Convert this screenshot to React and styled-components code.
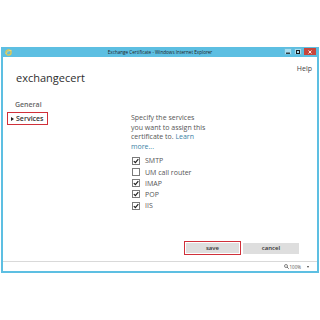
import React from 'react';
import styled, {createGlobalStyle} from 'styled-components';

const Global = createGlobalStyle`
	html, body {
		margin: 0;
		padding: 0;
		background: #fff;
		font-family: "Open Sans", "Liberation Sans", sans-serif;
	}
`;

const services = [
	{name: 'SMTP', checked: true},
	{name: 'UM call router', checked: false},
	{name: 'IMAP', checked: true},
	{name: 'POP', checked: true},
	{name: 'IIS', checked: true},
];

function Check({on}) {
	return (
		<Box>
			{on && (
				<svg width="6" height="6" viewBox="0 0 6 6">
					<path d="M0.8 3.1 L2.4 4.7 L5.3 1.1" fill="none" stroke="#222" strokeWidth="1.2" />
				</svg>
			)}
		</Box>
	);
}

export default function App() {
	return (
		<Page>
			<Global />
			<Window>
				<TitleBar>
					<IeIcon>
						<svg width="7" height="7" viewBox="0 0 7 7">
							<circle cx="3.5" cy="3.5" r="2.6" fill="none" stroke="#e6c84a" strokeWidth="1.3" />
							<path d="M0.6 5 Q3.5 0.5 6.6 1.4" fill="none" stroke="#f3dd7a" strokeWidth="0.8" />
						</svg>
					</IeIcon>
					<Caption>Exchange Certificate - Windows Internet Explorer</Caption>
					<Controls>
						<Ctl>
							<svg width="4" height="4" viewBox="0 0 4 4">
								<rect x="0" y="2.6" width="4" height="1.2" fill="#1b1b1b" />
							</svg>
						</Ctl>
						<Ctl>
							<svg width="4" height="4" viewBox="0 0 4 4">
								<rect x="0.5" y="0.5" width="3" height="3" fill="none" stroke="#1b1b1b" strokeWidth="1" />
							</svg>
						</Ctl>
						<Ctl close>
							<svg width="4" height="4" viewBox="0 0 4 4">
								<path d="M0.5 0.5 L3.5 3.5 M3.5 0.5 L0.5 3.5" stroke="#fff" strokeWidth="0.9" />
							</svg>
						</Ctl>
					</Controls>
				</TitleBar>
				<Client>
					<Main>
						<Header>
							<Title>exchangecert</Title>
							<Help>Help</Help>
						</Header>
						<Body>
							<Nav>
								<NavItem>General</NavItem>
								<NavItem active>
									<Arrow />
									Services
								</NavItem>
							</Nav>
							<Panel>
								<Intro>
									Specify the services
									<br />
									you want to assign this
									<br />
									certificate to. <Link>Learn</Link>
									<br />
									<Link>more...</Link>
								</Intro>
								<List>
									{services.map((s) => (
										<Row key={s.name}>
											<Check on={s.checked} />
											<span>{s.name}</span>
										</Row>
									))}
								</List>
							</Panel>
						</Body>
						<Footer>
							<Button primary>save</Button>
							<Button>cancel</Button>
						</Footer>
					</Main>
					<StatusBar>
						<Zoom>
							<svg width="5" height="5" viewBox="0 0 5 5">
								<circle cx="2" cy="2" r="1.5" fill="none" stroke="#555" strokeWidth="0.7" />
								<path d="M3.1 3.1 L4.7 4.7" stroke="#555" strokeWidth="0.9" />
							</svg>
							100%
						</Zoom>
						<Caret />
					</StatusBar>
				</Client>
			</Window>
		</Page>
	);
}

const Page = styled.div`
	padding: 47px 1px 0 1px;
	width: 320px;
	height: 320px;
	box-sizing: border-box;
`;

const Window = styled.div`
	width: 318px;
	height: 226px;
	box-sizing: border-box;
	background: #5dbfe2;
	padding: 0 2px 2px 2px;
	display: flex;
	flex-direction: column;
`;

const TitleBar = styled.div`
	height: 10px;
	display: grid;
	grid-template-columns: 1fr auto 1fr;
	align-items: center;
`;

const IeIcon = styled.div`
	display: flex;
	align-items: center;
	padding-left: 2px;
`;

const Caption = styled.div`
	font-size: 4.6px;
	color: #222;
	white-space: nowrap;
`;

const Controls = styled.div`
	display: flex;
	justify-content: flex-end;
	gap: 2px;
	padding-right: 1px;
	align-self: start;
	padding-top: 1px;
`;

const Ctl = styled.div`
	width: ${(p) => (p.close ? '12px' : '8px')};
	height: 7px;
	background: ${(p) => (p.close ? '#c8463c' : '#a9def0')};
	border: ${(p) => (p.close ? 'none' : '0.5px solid #6cbfdc')};
	box-sizing: border-box;
	display: flex;
	align-items: center;
	justify-content: center;
`;

const Client = styled.div`
	flex: 1;
	background: #fff;
	display: flex;
	flex-direction: column;
`;

const Main = styled.div`
	flex: 1;
	display: flex;
	flex-direction: column;
`;

const Header = styled.div`
	display: flex;
	justify-content: space-between;
	align-items: flex-start;
	height: 30px;
`;

const Title = styled.div`
	font-size: 11px;
	font-weight: 400;
	color: #2e2e2e;
	padding: 13px 0 0 13px;
	line-height: 16px;
`;

const Help = styled.div`
	font-size: 7px;
	color: #444;
	padding: 7px 5px 0 0;
	line-height: 10px;
`;

const Body = styled.div`
	flex: 1;
	display: grid;
	grid-template-columns: 128px 1fr;
`;

const Nav = styled.div`
	display: flex;
	flex-direction: column;
	align-items: flex-start;
	padding: 13px 0 0 4px;
	gap: 3px;
`;

const NavItem = styled.div`
	font-size: 7px;
	font-weight: 600;
	line-height: 9px;
	color: ${(p) => (p.active ? '#333' : '#666')};
	display: flex;
	align-items: center;
	box-sizing: border-box;
	width: ${(p) => (p.active ? '41px' : 'auto')};
	padding: ${(p) => (p.active ? '1px 0 1px 2.5px' : '0 0 0 8px')};
	border: ${(p) => (p.active ? '1.5px solid #d0303a' : 'none')};
`;

const Arrow = styled.span`
	width: 0;
	height: 0;
	border-top: 2px solid transparent;
	border-bottom: 2px solid transparent;
	border-left: 3px solid #222;
	margin-right: 2.5px;
`;

const Panel = styled.div`
	padding-top: 26px;
`;

const Intro = styled.div`
	font-size: 7px;
	line-height: 9.7px;
	color: #555;
`;

const Link = styled.span`
	color: #3a7fa6;
`;

const List = styled.div`
	margin-top: 3.5px;
	display: flex;
	flex-direction: column;
`;

const Row = styled.div`
	height: 11.2px;
	display: flex;
	align-items: center;
	gap: 5px;
	padding-left: 1px;
	font-size: 7px;
	color: #555;
`;

const Box = styled.div`
	width: 8px;
	height: 8px;
	box-sizing: border-box;
	border: 0.8px solid #7a7a7a;
	background: #fff;
	display: flex;
	align-items: center;
	justify-content: center;
`;

const Footer = styled.div`
	display: flex;
	justify-content: flex-end;
	align-items: center;
	gap: 2px;
	padding: 0 18px 6px 0;
`;

const Button = styled.div`
	width: ${(p) => (p.primary ? '57px' : '56px')};
	height: ${(p) => (p.primary ? '14px' : '11px')};
	box-sizing: border-box;
	background: #dedede;
	border: ${(p) => (p.primary ? '1.5px solid #d0303a' : 'none')};
	box-shadow: ${(p) => (p.primary ? 'inset 0 0 0 1px #fff' : 'none')};
	font-size: 6px;
	font-weight: 600;
	color: #333;
	display: flex;
	align-items: center;
	justify-content: center;
`;

const StatusBar = styled.div`
	height: 9px;
	border-top: 1px solid #d9d9d9;
	display: flex;
	justify-content: flex-end;
	align-items: center;
	gap: 6px;
	padding-right: 8px;
`;

const Zoom = styled.div`
	display: flex;
	align-items: center;
	gap: 1px;
	font-size: 4.5px;
	color: #555;
`;

const Caret = styled.span`
	width: 0;
	height: 0;
	border-left: 1.5px solid transparent;
	border-right: 1.5px solid transparent;
	border-top: 2px solid #444;
`;
